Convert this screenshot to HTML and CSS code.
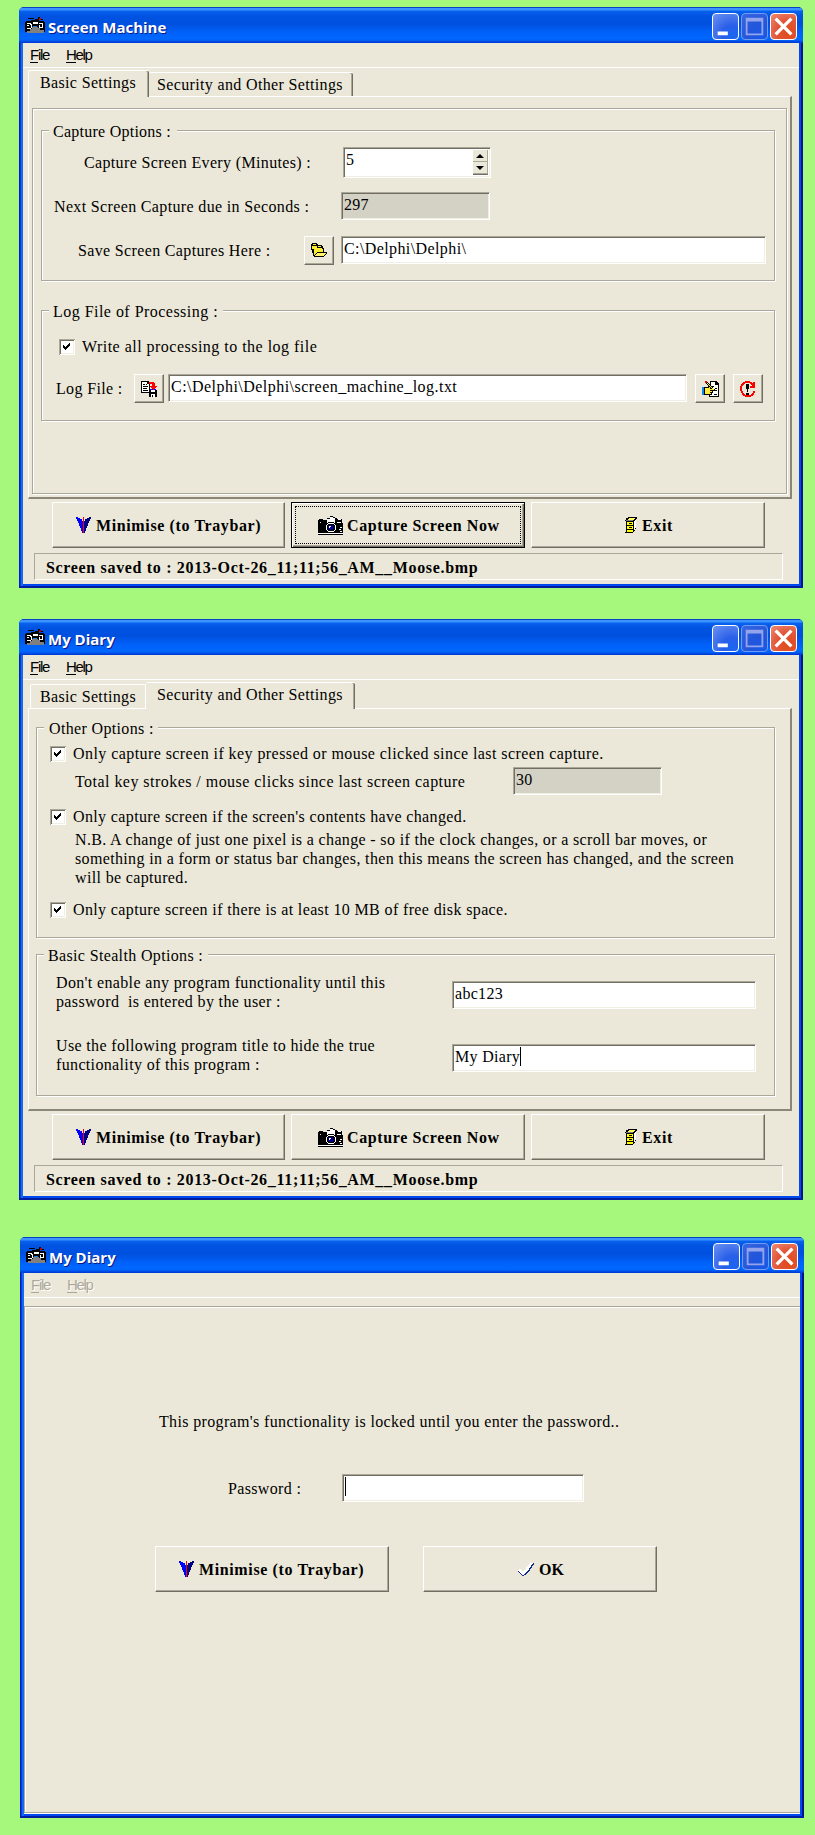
FILE: index.html
```
<!DOCTYPE html>
<html lang="en">
<head>
<meta charset="utf-8">
<title>Screen Machine</title>
<link rel="stylesheet" href="styles.css">
</head>
<body>
<svg class="defs" width="0" height="0" aria-hidden="true">
  <symbol id="app" viewBox="0 0 20 16">
    <path fill="#000" d="M1 4h5V3h8v1h5v1h1v10H0V5h1zM3 1h6v1H3zM10 2h3v1h-3zM13 0h2v3h-2zM16 2h2v1h-2z"/>
    <path fill="#b00" d="M14 1h2v2h-2z"/>
    <path fill="#fff" d="M2 6h4v1H2zM8 5h5v2H8zM14 6h4v1h-4zM2 8h2v1H2zM5 8h1v3H2v1h4v-1h1V7H5zM13 8h1v3h4V7h-1v3h-2V8z"/>
    <path fill="#808080" d="M7 10h6v1h2v2h4v3H2v-2h3v-2h2z"/>
    <path fill="#1484e8" d="M8 9h4v1H8z"/>
  </symbol>
  <symbol id="min" viewBox="0 0 27 27"><path fill="#fff" d="M5 19h11v4H5z"/></symbol>
  <symbol id="max" viewBox="0 0 27 27"><path fill="#93a4ec" d="M4 4h19v19H4zM6 8v13h15V8z" fill-rule="evenodd"/></symbol>
  <symbol id="close" viewBox="0 0 27 27"><path stroke="#fff" stroke-width="3.6" d="M5 5l17 17M22 5L5 22"/></symbol>
  <symbol id="arrow" viewBox="0 0 15 16">
    <path fill="#00f" d="M0 0h2v1h2v1h2v2h1v12H6v-2H5v-3H4V9H3V6H2V4H1V2H0z"/>
    <path fill="#000080" d="M15 0h-2v1h-2v1H9v2H8v12h1v-2h1v-3h1V9h1V6h1V4h1V2h1z"/>
    <path fill="#f00" d="M7 0h1v16H7z"/>
  </symbol>
  <symbol id="camera" viewBox="0 0 25 19">
    <path fill="#000" d="M12 0h3v1h2v1h2v1h5v4h1v12H0V4h1V3h4v1h4V2h3z"/>
    <path fill="#fff" d="M12 1h3v1h2v5h-1V6h-6v1H9V3h3zM20 3h3v1h-3zM19 6h4v1h-4zM0 17h25v1H0zM22 11h2v1h-2zM21 13h2v1h-2zM22 15h2v1h-2zM10 7h6v1h-6zM8 9h1v5H8zM17 9h1v5h-1zM10 15h6v1h-6zM9 8h1v1H9zM16 8h1v1h-1zM9 14h1v1H9zM16 14h1v1h-1z"/>
    <path fill="#000080" d="M11 9h4v1h1v3h-1v1h-4v-1h-1v-3h1z"/>
    <path fill="#fff" d="M11 10h2v1h-1v1h-1z"/>
    <path fill="#ece9d8" d="M2 6h1v1H2z"/>
  </symbol>
  <symbol id="exit" viewBox="0 0 12 16">
    <path fill="#000" d="M3 0h9v2h-1v10h-1v2H9v1H8v1H0v-1h1V4H0V3h1V1h2z"/>
    <path fill="#808080" d="M1 3h7v1H1z"/>
    <path fill="#ff6" d="M4 1h6v1H9v1H3V2h1z"/>
    <path fill="#ff0" d="M2 5h6v10H2z"/>
    <path fill="#000" d="M4 6h3v1H4zM2 8h6v1H2zM4 10h3v1H4zM2 12h6v1H2z"/>
    <path fill="#fff" d="M9 4h1V3h1v8h-1v2H9z"/>
  </symbol>
  <symbol id="tick" viewBox="0 0 16 15">
    <path fill="none" stroke="#fff" stroke-width="3" d="M1 8l4 4L14 1"/>
    <path fill="none" stroke="#102a8c" stroke-width="1.2" d="M0 9l5 5L10.500 9L15.500 1.500"/>
  </symbol>
  <symbol id="folder" viewBox="0 0 16 15">
    <path fill="#000" d="M1 0h5v1h1v1h4v1h1v2h1v4h3v2h-1v1h-1v1h-1v1H3v-1H2v-3H1V7H0V1h1z"/>
    <path fill="#f8ec30" d="M2 1h3v1H2zM1 3h5v3H1zM7 3h3v1H7zM3 6h3V5h5v1h1v3H6v1H5v1H4v1H3z"/>
    <path fill="#fff36b" d="M6 10h9v1h-1v1h-1v1H4v-1h1v-1h1z"/>
  </symbol>
  <symbol id="savelog" viewBox="0 0 16 16">
    <path fill="#000" d="M0 0h7l2 2v10H0z"/>
    <path fill="#fff" d="M1 1h5v2h2v8H1z"/>
    <path fill="#000" d="M2 3h2v1H2zM2 5h5v1H2zM2 7h4v1H2zM2 9h5v1H2zM5 3h1v1H5z"/>
    <path fill="#000" d="M8 9h8v7H8z"/>
    <path fill="#00f" d="M9 8h6v1H9z"/>
    <path fill="#fff" d="M10 9h4v2h-4zM10 13h4v3h-4z"/>
    <path fill="#000" d="M11 14h1v2h-1z"/>
    <path fill="#f00" d="M8 1h5v1h1v3h2v1h-1v1h-1v1h-1v1h-1V8h-1V7h-1V6H9V5h2V3H8z"/>
  </symbol>
  <symbol id="editlog" viewBox="0 0 17 16">
    <path fill="#000" d="M8 0h6l3 3v13H7V7h1z"/>
    <path fill="#fff" d="M9 1h4v3h3v11H8V9h1z"/>
    <path fill="#000" d="M10 5h2v1h-2zM13 7h2v1h-2zM12 9h3v1h-3zM10 11h1v1h-1zM12 13h3v1h-3zM13 1h1v3h-1z"/>
    <path fill="#000" d="M2 6h4V4h2v2h3v2h2v2h-2v2h-1v2H2z"/>
    <path fill="#ffe93b" d="M3 7h4V6h1v2h4v1H8v1h2v1H8v1h1v1H3z"/>
    <path fill="#1484e8" d="M0 6h2v8H0z"/>
    <path fill="none" stroke="#000" stroke-width="2.500" d="M4 1l7 7"/>
    <path fill="none" stroke="#ff0" d="M4 1l7 7"/>
    <path fill="#f00" d="M3 0h2v2H3z"/>
  </symbol>
  <symbol id="refresh" viewBox="0 0 16 16">
    <path fill="#f00" d="M5 0h5v1h2v1h1V1h2v6H10V5h2V4h-1V3h-1V2H5v1H4v1H3v1H2v5h1v2h1v1h1v1h6v-1h1v-1h1v-2h2v2h-1v2h-1v1h-2v1H5v-1H3v-1H2v-2H1v-2H0V5h1V3h1V2h1V1h2z"/>
    <path fill="#000" d="M6 3h3v5H8v3H7V8H6zM6 12h3v2H6z"/>
  </symbol>
  <symbol id="check" viewBox="0 0 16 16"><path fill="#000" d="M4 6h1v1h1v1h1V7h1V6h1V5h1V4h1v3h-1v1H9v1H8v1H7v1H6v-1H5V9H4z"/></symbol>
</svg>

<section class="window">
  <header class="titlebar">
    <svg class="appicon"><use href="#app"/></svg><h1>Screen Machine</h1>
    <div class="controls"><svg class="wb blue"><use href="#min"/></svg><svg class="wb dim"><use href="#max"/></svg><svg class="wb red"><use href="#close"/></svg></div>
  </header>
  <div class="client">
    <nav class="menu"><span><u>F</u>ile</span><span><u>H</u>elp</span></nav>
    <div class="tabs"><div class="tab active first">Basic Settings</div><div class="tab second">Security and Other Settings</div></div>
    <div class="pane">
      <div class="frame inner">
        <div class="frame group capture">
          <div class="legend">Capture Options :</div>
          <div class="row every"><label>Capture Screen Every (Minutes) :</label>
            <div class="field spin"><span>5</span><div class="spinner"><i class="up"></i><i class="down"></i></div></div></div>
          <div class="row next"><label>Next Screen Capture due in Seconds :</label><div class="field readonly">297</div></div>
          <div class="row save"><label>Save Screen Captures Here :</label><div class="tool"><svg width="16" height="15"><use href="#folder"/></svg></div><div class="field path">C:\Delphi\Delphi\</div></div>
        </div>
        <div class="frame group log">
          <div class="legend">Log File of Processing :</div>
          <div class="check"><svg><use href="#check"/></svg><label>Write all processing to the log file</label></div>
          <div class="row logfile"><label>Log File :</label><div class="tool"><svg width="16" height="16"><use href="#savelog"/></svg></div><div class="field path">C:\Delphi\Delphi\screen_machine_log.txt</div><div class="tool edit"><svg width="17" height="16"><use href="#editlog"/></svg></div><div class="tool edit"><svg width="16" height="16"><use href="#refresh"/></svg></div></div>
        </div>
      </div>
    </div>
    <div class="buttons">
      <div class="button mini"><svg width="15" height="16"><use href="#arrow"/></svg><span>Minimise (to Traybar)</span></div>
      <div class="button shot focused"><svg width="25" height="19"><use href="#camera"/></svg><span>Capture Screen Now</span></div>
      <div class="button quit"><svg width="12" height="16"><use href="#exit"/></svg><span>Exit</span></div>
    </div>
    <footer class="status">Screen saved to : 2013-Oct-26_11;11;56_AM__Moose.bmp</footer>
  </div>
</section>

<section class="window diary">
  <header class="titlebar">
    <svg class="appicon"><use href="#app"/></svg><h1>My Diary</h1>
    <div class="controls"><svg class="wb blue"><use href="#min"/></svg><svg class="wb dim"><use href="#max"/></svg><svg class="wb red"><use href="#close"/></svg></div>
  </header>
  <div class="client">
    <nav class="menu"><span><u>F</u>ile</span><span><u>H</u>elp</span></nav>
    <div class="tabs"><div class="tab first">Basic Settings</div><div class="tab active second">Security and Other Settings</div></div>
    <div class="pane">
      <div class="frame group other">
        <div class="legend">Other Options :</div>
        <div class="check c1"><svg><use href="#check"/></svg><label>Only capture screen if key pressed or mouse clicked since last screen capture.</label></div>
        <div class="row total"><label>Total key strokes / mouse clicks since last screen capture</label><div class="field readonly">30</div></div>
        <div class="check c2"><svg><use href="#check"/></svg><label>Only capture screen if the screen's contents have changed.</label></div>
        <p class="note">N.B. A change of just one pixel is a change - so if the clock changes, or a scroll bar moves, or<br>something in a form or status bar changes, then this means the screen has changed, and the screen<br>will be captured.</p>
        <div class="check c3"><svg><use href="#check"/></svg><label>Only capture screen if there is at least 10 MB of free disk space.</label></div>
      </div>
      <div class="frame group stealth">
        <div class="legend">Basic Stealth Options :</div>
        <div class="row pair"><p>Don't enable any program functionality until this<br>password &nbsp;is entered by the user :</p><div class="field">abc123</div></div>
        <div class="row pair use"><p>Use the following program title to hide the true<br>functionality of this program :</p><div class="field">My Diary<i class="caret"></i></div></div>
      </div>
    </div>
    <div class="buttons">
      <div class="button mini"><svg width="15" height="16"><use href="#arrow"/></svg><span>Minimise (to Traybar)</span></div>
      <div class="button shot"><svg width="25" height="19"><use href="#camera"/></svg><span>Capture Screen Now</span></div>
      <div class="button quit"><svg width="12" height="16"><use href="#exit"/></svg><span>Exit</span></div>
    </div>
    <footer class="status">Screen saved to : 2013-Oct-26_11;11;56_AM__Moose.bmp</footer>
  </div>
</section>

<section class="window locked">
  <header class="titlebar">
    <svg class="appicon"><use href="#app"/></svg><h1>My Diary</h1>
    <div class="controls"><svg class="wb blue"><use href="#min"/></svg><svg class="wb dim"><use href="#max"/></svg><svg class="wb red"><use href="#close"/></svg></div>
  </header>
  <div class="client">
    <nav class="menu disabled"><span><u>F</u>ile</span><span><u>H</u>elp</span></nav>
    <div class="frame lock">
      <p class="message">This program's functionality is locked until you enter the password..</p>
      <div class="row password"><label>Password :</label><div class="field"><i class="caret"></i></div></div>
      <div class="buttons">
        <div class="button mini"><svg width="15" height="16"><use href="#arrow"/></svg><span>Minimise (to Traybar)</span></div>
        <div class="button ok"><svg width="16" height="15"><use href="#tick"/></svg><span>OK</span></div>
      </div>
    </div>
  </div>
</section>
</body>
</html>
```
FILE: styles.css
```
* { box-sizing: border-box; }
body {
  margin: 0;
  padding: 7px 0 17px 19px;
  background: #a5f87b;
  color: #000;
  font: 16px/20px "Liberation Serif", "Times New Roman", serif;
  letter-spacing: 0.35px;
  white-space: nowrap;
}
p, h1 { margin: 0; }
.defs { display: block; position: absolute; }
svg { display: block; flex: none; shape-rendering: crispEdges; }

.window {
  width: 784px;
  height: 581px;
  border-radius: 5px 5px 0 0;
  background: linear-gradient(90deg, #0019cf 0 1px, #0a3ae0 1px 2px, #166aee 2px 4px, #0048f0 4px 782px, #00138c 782px);
  box-shadow: inset 0 -2px #001ea0;
}
.diary { margin-top: 31px; }
.locked { margin: 37px 0 0 1px; }
.titlebar {
  display: flex;
  height: 36px;
  padding: 6px 6px 0;
  border-radius: 5px 5px 0 0;
  background: linear-gradient(#0842c5 0 1px, #3a93ff 1px 3px, #0862ee 4px, #0053e1 9px, #0050de 17px, #0060f8 25px, #0068ff 32px, #0058ee 34px, #003dd7 35px);
}
.appicon { width: 20px; height: 16px; margin-top: 4px; }
h1 {
  margin: 2px 0 0 3px;
  color: #fff;
  font: bold 15px/24px "Open Sans", "Noto Sans", sans-serif;
  letter-spacing: 0;
  text-shadow: 1px 1px #0a1883;
}
.controls { display: flex; gap: 2px; margin-left: auto; }
.wb { width: 27px; height: 27px; padding: 0; border: 1px solid #fff; border-radius: 4px; shape-rendering: auto; }
.wb.blue { background: radial-gradient(circle at 75% 85%, #1a66f2, #2a5fe8 35%, #6c93f2); }
.wb.dim { border-color: #6f9bf6; background: radial-gradient(circle at 80% 90%, #1858e8, #2456d8 50%, #3a68e4); }
.wb.red { background: radial-gradient(circle at 70% 75%, #e04a18, #e2573a 50%, #ee8c74); }

.client {
  display: flex;
  flex-direction: column;
  align-items: flex-start;
  width: 776px;
  height: 541px;
  margin-left: 4px;
  overflow: hidden;
  background: #ece8d9;
}
.menu {
  display: flex;
  gap: 17px;
  width: 776px;
  height: 25px;
  padding: 2px 0 0 7px;
  border-bottom: 1px solid #fff;
  font: 15px/20px "Liberation Sans", Arial, sans-serif;
  letter-spacing: -1.3px;
}
.menu u { text-decoration: none; border-bottom: 1px solid; display: inline-block; line-height: 15px; }
.disabled { color: #aca899; text-shadow: 1px 1px #fff; }

.tabs { display: flex; align-items: flex-end; width: 776px; height: 28px; padding-left: 5px; }
.tab {
  height: 24px;
  padding: 2px 0 0 7px;
  border: 1px solid #fff;
  border-width: 1px 0 0 0;
  border-radius: 2px 2px 0 0;
}
.tab.first { width: 116px; margin-left: 2px; padding-left: 9px; border-width: 1px 1px 0; }
.tab.second { width: 204px; padding-left: 8px; box-shadow: inset -1px 0 #716f64, inset -2px 0 #aca899; }
.tab.active { position: relative; z-index: 1; margin-bottom: -1px; background: #ece8d9; }
.tab.first.active { width: 121px; height: 27px; margin-left: 0; padding-left: 11px; border-width: 1px 0 0 1px; box-shadow: inset -1px 0 #716f64, inset -2px 0 #aca899; }
.tab.second.active { width: 209px; height: 27px; padding-left: 11px; }

.pane {
  width: 764px;
  height: 403px;
  margin-left: 5px;
  border: solid;
  border-width: 1px 2px 2px 1px;
  border-color: #fff #8a8778 #8a8778 #fff;
}
.diary .pane, .inner { display: flex; flex-direction: column; }
.frame { border: 1px solid #aca899; box-shadow: 1px 1px #fff, inset 1px 1px #fff; }
.inner { width: 755px; height: 386px; margin: 11px 0 0 3px; }
.group { width: 734px; margin-left: 8px; }
.legend { height: 20px; margin: -9px 0 0 7px; padding-left: 5px; background: #ece8d9; }
.row { display: flex; align-items: flex-start; }
.row label { flex: none; margin-top: 5px; }

.capture { height: 151px; margin-top: 21px; }
.capture .legend { width: 128px; padding-left: 4px; letter-spacing: 0.25px; }
.every { height: 31px; margin: 5px 0 0 42px; }
.every label { width: 259px; margin-top: 6px; }
.next { height: 28px; margin: 14px 0 0 12px; }
.next label { width: 287px; }
.save { margin: 16px 0 0 36px; }
.save label { width: 226px; }
.save .path { width: 425px; margin-left: 7px; letter-spacing: 0.4px; }

.field {
  display: flex;
  flex: none;
  height: 28px;
  padding: 2px 0 0 2px;
  border: 1px solid;
  border-color: #aca899 #fff #fff #aca899;
  box-shadow: inset 1px 1px #716f64, inset -1px -1px #f1efe2;
  background: #fff;
  letter-spacing: 0.3px;
}
.readonly { width: 149px; padding-left: 2px; background: #d4d1c5; }
.spin { width: 148px; height: 31px; justify-content: space-between; padding: 2px; }
.spinner { display: flex; flex-direction: column; width: 15px; height: 25px; background: #ece8d9; box-shadow: inset -1px -1px #716f64; }
.spinner i { height: 12px; border: 1px solid #aca899; border-width: 0 1px 1px 0; }
.spinner i::after { content: ""; display: block; width: 0; margin: 4px 0 0 3px; border: 4px solid transparent; }
.spinner .up::after { border-top: 0; border-bottom-color: #000; }
.spinner .down::after { border-bottom: 0; border-top-color: #000; }

.log { height: 111px; margin-top: 29px; }
.log .legend { width: 174px; padding-left: 4px; letter-spacing: 0.47px; }
.check { display: flex; height: 16px; gap: 7px; letter-spacing: 0.43px; }
.check svg {
  width: 16px;
  height: 16px;
  background: #fff;
  box-shadow: inset 1px 1px #aca899, inset -1px -1px #fff, inset 2px 2px #716f64, inset -2px -2px #f1efe2;
}
.check label { margin-top: -2px; }
.log .check { margin: 17px 0 0 17px; letter-spacing: 0.48px; }
.logfile { margin: 19px 0 0 14px; }
.logfile label { width: 78px; }
.logfile .path { width: 519px; margin-left: 4px; padding-left: 2px; letter-spacing: 0.47px; }
.edit { margin-left: 8px; }
.tool {
  display: flex;
  flex: none;
  justify-content: center;
  align-items: center;
  width: 30px;
  height: 29px;
}
.tool, .button {
  border: 1px solid;
  border-color: #fff #716f64 #716f64 #fff;
  box-shadow: inset -1px -1px #aca899;
}

.buttons { display: flex; gap: 6px; margin: 3px 0 0 29px; }
.button {
  display: flex;
  align-items: center;
  gap: 5px;
  width: 234px;
  height: 46px;
  font-weight: bold;
  letter-spacing: 0.62px;
}
.button span { padding-top: 1px; }
.button.mini { width: 233px; padding-left: 23px; }
.button.shot { padding-left: 26px; gap: 4px; }
.button.quit { padding-left: 93px; }
.button.focused { border-color: #000; outline: 1px dotted #000; outline-offset: -5px; box-shadow: inset 1px 1px #fff, inset -1px -1px #716f64, inset -2px -2px #aca899; }
.status {
  width: 749px;
  height: 27px;
  margin: 5px 0 0 11px;
  padding: 4px 0 0 11px;
  border: 1px solid;
  border-color: #aca899 #fff #fff #aca899;
  font-weight: bold;
  letter-spacing: 0.67px;
}

.diary .group { width: 739px; margin-left: 7px; }
.other { height: 211px; margin-top: 18px; }
.other .legend { width: 114px; }
.other .check { margin-left: 13px; }
.c1 { margin-top: 7px; }
.total { height: 28px; margin: 5px 0 0 38px; }
.total label { width: 438px; letter-spacing: 0.46px; }
.c2 { margin-top: 14px; }
.note { margin: 5px 0 0 38px; line-height: 19px; }
.c3 { margin-top: 15px; }
.other .c2, .other .c3 { letter-spacing: 0.37px; }
.stealth { height: 142px; margin-top: 16px; }
.stealth .legend { width: 164px; padding-left: 4px; }
.pair { height: 38px; margin: 7px 0 0 19px; }
.pair p { flex: none; width: 396px; line-height: 19px; }
.pair .field { width: 304px; margin-top: 8px; }
.use { margin-top: 25px; }
.caret { width: 1px; height: 19px; background: #000; }

.lock { width: 776px; height: 507px; margin-top: 8px; border-right: 0; }
.message { margin: 105px 0 0 134px; }
.password { margin: 42px 0 0 203px; }
.password label { width: 114px; }
.password .field { width: 242px; }
.lock .buttons { gap: 34px; margin: 44px 0 0 130px; }
.lock .button.mini { width: 234px; }
.button.ok { padding-left: 94px; letter-spacing: 0; }
```
